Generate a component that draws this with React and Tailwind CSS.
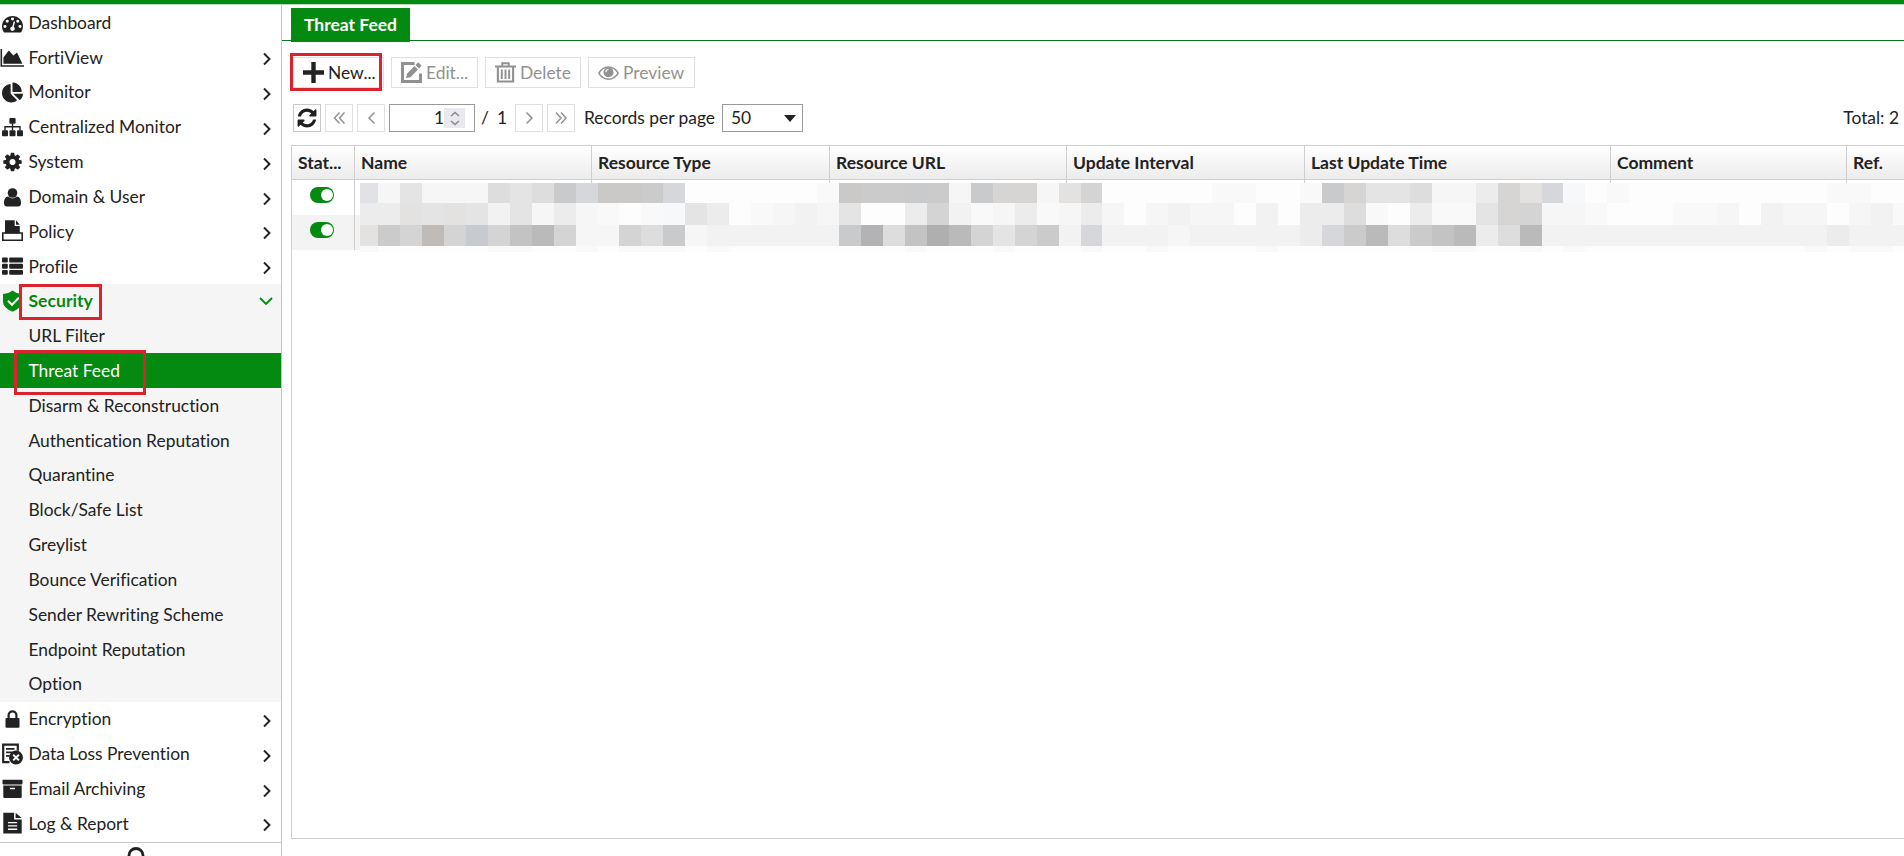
import React, { useState } from "react";
import clsx from "clsx";
import { FaChartPie } from "react-icons/fa";

const Svg = ({ children, className = "h-6 w-6" }) => (
  <svg className={clsx("shrink-0", className)} viewBox="0 0 24 24" fill="currentColor">
    {children}
  </svg>
);

const DashboardIcon = () => (
  <Svg>
    <path
      transform="translate(2 2.9) scale(0.01172)"
      d="M384 1152q0-53-37.5-90.5t-90.5-37.5-90.5 37.5-37.5 90.5 37.5 90.5 90.5 37.5 90.5-37.5 37.5-90.5zm192-448q0-53-37.5-90.5t-90.5-37.5-90.5 37.5-37.5 90.5 37.5 90.5 90.5 37.5 90.5-37.5 37.5-90.5zm428 481l101-382q6-26-7.5-48.5t-38.5-29.5-48 6.5-30 39.5l-101 382q-60 5-107 43.5t-63 98.5q-20 77 20 146t117 89 146-20 89-117q16-60-6-117t-72-91zm660-33q0-53-37.5-90.5t-90.5-37.5-90.5 37.5-37.5 90.5 37.5 90.5 90.5 37.5 90.5-37.5 37.5-90.5zm-640-640q0-53-37.5-90.5t-90.5-37.5-90.5 37.5-37.5 90.5 37.5 90.5 90.5 37.5 90.5-37.5 37.5-90.5zm448 192q0-53-37.5-90.5t-90.5-37.5-90.5 37.5-37.5 90.5 37.5 90.5 90.5 37.5 90.5-37.5 37.5-90.5zm320 448q0 261-141 483-19 29-54 29h-1402q-35 0-54-29-141-221-141-483 0-182 71-348t191-286 286-191 348-71 348 71 286 191 191 286 71 348z"
    />
  </Svg>
);

const AreaIcon = () => (
  <Svg>
    <path d="M.5 4h1.6v16.2H24v1.6H.5z" />
    <path d="M3.4 18.8v-6.2l5.4-7.1 4.6 5 3.6-3 5.4 11.3z" />
  </Svg>
);

const PieIcon = () => <FaChartPie className="ml-0.5 mr-px h-[21px] w-[21px] shrink-0" />;

const SitemapIcon = () => (
  <Svg>
    <rect x="9.4" y="3" width="6.2" height="5.8" rx="1" />
    <rect x="2" y="15.2" width="6" height="6" rx="1" />
    <rect x="9.5" y="15.2" width="6" height="6" rx="1" />
    <rect x="17" y="15.2" width="6" height="6" rx="1" />
    <path d="M5 15.5v-3.8h15v3.8M12.5 8.5v7" fill="none" stroke="currentColor" strokeWidth="1.4" />
  </Svg>
);

const CogIcon = () => (
  <Svg>
    <path
      transform="translate(1.8 1.3) scale(0.01195)"
      d="M1152 896q0-106-75-181t-181-75-181 75-75 181 75 181 181 75 181-75 75-181zm512-109v222q0 12-8 23t-20 13l-185 28q-19 54-39 91 35 50 107 138 10 12 10 25t-9 23q-27 37-99 108t-94 71q-12 0-26-9l-138-108q-44 23-91 38-16 136-29 186-7 28-36 28h-222q-14 0-24.5-8.5t-11.5-21.5l-28-184q-49-16-90-37l-141 107q-10 9-25 9-14 0-25-11-126-114-165-168-7-10-7-23 0-12 8-23 15-21 51-66.5t54-70.5q-27-50-41-99l-183-27q-13-2-21-12.5t-8-23.5v-222q0-12 8-23t19-13l186-28q14-46 39-92-40-57-107-138-10-12-10-24 0-10 9-23 26-36 98.5-107.5t94.5-71.5q13 0 26 10l138 107q44-23 91-38 16-136 29-186 7-28 36-28h222q14 0 24.5 8.5t11.5 21.5l28 184q49 16 90 37l142-107q9-9 24-9 13 0 25 10 129 119 165 170 7 8 7 22 0 12-8 23-15 21-51 66.5t-54 70.5q26 50 41 98l183 28q13 2 21 12.5t8 23.5z"
    />
  </Svg>
);

const UserIcon = () => (
  <Svg>
    <circle cx="12.5" cy="8" r="4.8" />
    <path d="M8.2 11.6a6 6 0 0 0 8.6 0c3 .2 4.2 3 4.2 6.6 0 2-1.2 3.3-3 3.3H7c-1.8 0-3-1.3-3-3.3 0-3.6 1.2-6.4 4.2-6.6z" />
  </Svg>
);

const PolicyIcon = () => (
  <Svg>
    <path d="M5 1.3h9.7V7h5.1v7.3H5z" />
    <path d="M16 1.3l3.8 4.4H16z" />
    <path d="M5.3 14H2.8v7.3h19.4V14h-2.4" fill="none" stroke="currentColor" strokeWidth="1.6" />
    <path d="M5 13.2h14.8v1.6H5z" />
  </Svg>
);

const ListIcon = () => (
  <Svg>
    <rect x="2" y="3.6" width="5.8" height="5" rx="1" />
    <rect x="9.2" y="3.6" width="13.8" height="5" rx="1" />
    <rect x="2" y="9.8" width="5.8" height="5" rx="1" />
    <rect x="9.2" y="9.8" width="13.8" height="5" rx="1" />
    <rect x="2" y="16" width="5.8" height="4.8" rx="1" />
    <rect x="9.2" y="16" width="13.8" height="4.8" rx="1" />
  </Svg>
);

const ShieldIcon = () => (
  <Svg>
    <path d="M12.5 1.6c2.5 2 5.6 3.2 9.5 3.4v7.5c0 5-4.5 8-9.5 10.2C7.5 20.5 3 17.5 3 12.5V5c3.9-.2 7-1.4 9.5-3.4z" />
    <path d="M8 11.8l4 4 6.8-7" fill="none" stroke="#fff" strokeWidth="2" />
  </Svg>
);

const LockIcon = () => (
  <Svg>
    <rect x="5.5" y="11" width="14" height="9.8" rx="1" />
    <path d="M8.6 11.5V8.3a3.9 3.9 0 0 1 7.8 0v3.2" fill="none" stroke="currentColor" strokeWidth="2.2" />
  </Svg>
);

const DlpIcon = () => (
  <Svg>
    <path d="M9.5 20.2H3.2V2.6h14.6v6.2" fill="none" stroke="currentColor" strokeWidth="2.2" />
    <path d="M6 6.8h8.5M6 10.3h6.5M6 13.8h3.5" stroke="currentColor" strokeWidth="1.7" />
    <circle cx="16" cy="15.6" r="7" />
    <path d="M13.2 12.7l5.7 5.7M18.9 12.7l-5.7 5.7" stroke="#fff" strokeWidth="2" />
  </Svg>
);

const ArchiveIcon = () => (
  <Svg>
    <rect x="2.5" y="2.8" width="20" height="4.6" rx=".8" />
    <path fillRule="evenodd" d="M3.3 8.5h18.4v11.6q0 1-1 1H4.3q-1 0-1-1zM10 10.7v1.5h5v-1.5z" />
  </Svg>
);

const FileIcon = () => (
  <Svg>
    <path fillRule="evenodd" d="M3.3 1.8h10.8v6.6h7.6v14.2H3.3zM8 11v1.3h9.2V11zm0 3.3v1.3h9.2v-1.3zm0 3.3v1.3h9.2v-1.3z" />
    <path d="M15.6 1.8l6 5.2h-6z" />
  </Svg>
);

const PlusIcon = () => (
  <Svg className="h-[21px] w-[21px]">
    <path d="M9.5 0h5v9.5H24v5h-9.5V24h-5v-9.5H0v-5h9.5z" />
  </Svg>
);

const EditIcon = () => (
  <Svg className="h-[21px] w-[21px]">
    <path d="M15.5 1.7H1.7v20.6h20.6V13" fill="none" stroke="currentColor" strokeWidth="3.4" />
    <path d="M5.8 18.3l1-5 8.6-8.7 4 4-8.6 8.7zM16.5 3.5l2.4-2.4q.8-.8 1.6 0l2.4 2.4q.8.8 0 1.6l-2.4 2.4z" />
  </Svg>
);

const TrashIcon = () => (
  <Svg className="h-[21px] w-[21px]">
    <path d="M0 5.2h24M8.3 5V1.5h7.4V5" fill="none" stroke="currentColor" strokeWidth="2.2" />
    <path d="M3.3 5.5v16.8h17.4V5.5" fill="none" stroke="currentColor" strokeWidth="2.4" />
    <path d="M7.8 8.5v11M12 8.5v11M16.2 8.5v11" stroke="currentColor" strokeWidth="2.2" />
  </Svg>
);

const EyeIcon = () => (
  <Svg className="h-[21px] w-[21px]">
    <path
      d="M1 12.8C3.5 8.3 7.4 5.8 12 5.8s8.5 2.5 11 7c-2.5 4.5-6.4 7-11 7s-8.5-2.5-11-7z"
      fill="none"
      stroke="currentColor"
      strokeWidth="1.7"
    />
    <circle cx="12" cy="11.8" r="5.7" />
    <path d="M9 11.6a3 3 0 0 1 3-3" fill="none" stroke="#fff" strokeWidth="1.2" />
  </Svg>
);

const RefreshIcon = () => (
  <svg className="h-[22px] w-[22px] shrink-0 text-[#1d1f20]" viewBox="0 0 1792 1792" fill="currentColor">
    <path d="M1639 1056q0 5-1 7-64 268-268 434.5t-478 166.5q-146 0-282.5-55t-243.5-157l-129 129q-19 19-45 19t-45-19-19-45v-448q0-26 19-45t45-19h448q26 0 45 19t19 45-19 45l-137 137q71 66 161 102t187 36q134 0 250-65t186-179q11-17 53-117 8-23 30-23h192q13 0 22.5 9.5t9.5 22.5zm25-800v448q0 26-19 45t-45 19h-448q-26 0-45-19t-19-45 19-45l138-138q-148-137-349-137-134 0-250 65t-186 179q-11 17-53 117-8 23-30 23h-199q-13 0-22.5-9.5t-9.5-22.5v-7q65-268 270-434.5t480-166.5q146 0 284 55.5t245 156.5l130-129q19-19 45-19t45 19 19 45z" />
  </svg>
);

// d is drawn in a 14x14 box
const Chevron = ({ d, className, width = 1.5 }) => (
  <svg className={clsx("h-3.5 w-3.5 shrink-0", className)} viewBox="0 0 14 14" fill="none" stroke="currentColor" strokeWidth={width}>
    <path d={d} />
  </svg>
);

const menu = [
  { name: "Dashboard", icon: DashboardIcon, leaf: true },
  { name: "FortiView", icon: AreaIcon },
  { name: "Monitor", icon: PieIcon },
  { name: "Centralized Monitor", icon: SitemapIcon },
  { name: "System", icon: CogIcon },
  { name: "Domain & User", icon: UserIcon },
  { name: "Policy", icon: PolicyIcon },
  { name: "Profile", icon: ListIcon },
  {
    name: "Security",
    icon: ShieldIcon,
    children: [
      "URL Filter",
      "Threat Feed",
      "Disarm & Reconstruction",
      "Authentication Reputation",
      "Quarantine",
      "Block/Safe List",
      "Greylist",
      "Bounce Verification",
      "Sender Rewriting Scheme",
      "Endpoint Reputation",
      "Option",
    ],
  },
  { name: "Encryption", icon: LockIcon },
  { name: "Data Loss Prevention", icon: DlpIcon },
  { name: "Email Archiving", icon: ArchiveIcon },
  { name: "Log & Report", icon: FileIcon },
];

const columns = ["Stat...", "Name", "Resource Type", "Resource URL", "Update Interval", "Last Update Time", "Comment", "Ref."];

const shades = {
  A: "bg-[#afafaf]",
  B: "bg-[#bababa]",
  C: "bg-[#c3c3c3]",
  D: "bg-[#cbcbcb]",
  E: "bg-[#d4d4d4]",
  F: "bg-[#dddddd]",
  G: "bg-[#e4e4e4]",
  H: "bg-[#ececec]",
  I: "bg-[#f2f2f2]",
  J: "bg-[#f6f6f6]",
  K: "bg-[#f9f9f9]",
  L: "bg-[#fdfdfd]",
  a: "bg-[#bfbbb8]",
  b: "bg-[#c8cacc]",
  c: "bg-[#d5d7da]",
  d: "bg-[#e0e2e6]",
  e: "bg-[#cbc9c8]",
  f: "bg-[#d6d5d3]",
  g: "bg-[#e3e2e0]",
  h: "bg-[#c7cbd0]",
  k: "bg-[#b3b2b4]",
  n: "bg-[#f7f8fa]",
};

// Pixelated cover over the record values, one letter per block
const mosaic = [
  "dJGJJJFGFbceeDcLLLLLLKeDDbDJbffJgELLLLLKKLLKbfGGFJJHfgcnLKLLLLLLLLLKKLL",
  "HHgGgGIGJHJKLKnGHLKJIJGLLHEIKJHKJHJLJIJJLILHHFKLHKKGfEJJKLLLKKJLIJJLJIK",
  "gDEaEhECBEJJEFbJIIIIIIbkFCABEGEDIcIIIJIIIIIHcDBFDCBHFBIIIIIIIIIIIIIHIII",
  "KLLLLLKKLLKLKKKLKLLLLLLLLKLLLKLLLKLLKLLLLKLLLLLLLKKLLKLKLLLLLLLLLLKLKKL",
];

const Marker = ({ className }) => (
  <span className={clsx("pointer-events-none absolute z-10 border-[3px] border-[#d9232e]", className)} />
);

const Toggle = () => (
  <span className="flex h-4 w-6 items-center justify-end rounded-full bg-[#048a10] pr-[1.5px]">
    <span className="h-3 w-3 rounded-full bg-white" />
  </span>
);

const ToolButton = ({ icon: Icon, label, disabled, className }) => (
  <button
    className={clsx(
      "flex h-[31px] items-center gap-1 border border-[#e0e0e0] pl-[9px]",
      disabled ? "text-[#919191]" : "text-[#222]",
      className
    )}
  >
    <Icon />
    <span>{label}</span>
  </button>
);

const PageButton = ({ children, className }) => (
  <button className={clsx("flex h-7 w-7 items-center justify-center border text-[#919191]", className)}>{children}</button>
);

const Sidebar = ({ active, onSelect }) => (
  <nav className="flex w-[282px] shrink-0 flex-col border-r border-[#c3c5c6]">
    {menu.map(({ name, icon: Icon, leaf, children }) => (
      <div key={name} className={clsx(children && "bg-[#f5f5f5]")}>
        <div className={clsx("relative flex h-[34.84px] items-center", children && "text-[17.6px] font-bold text-[#048a10]")}>
          <Icon />
          <span className="ml-[4.5px] flex-1">{name}</span>
          {!leaf && !children && <Chevron className="mr-[7px] mt-1" width={1.9} d="M4 1.5l5.5 5.5L4 12.5" />}
          {children && <Chevron className="mr-2" width={1.9} d="M1 4l6 6 6-6" />}
          {children && <Marker className="left-[19px] top-0 h-9 w-[83px]" />}
        </div>
        {children?.map((child) => (
          <div
            key={child}
            onClick={() => onSelect(child)}
            className={clsx("relative flex h-[34.84px] cursor-pointer items-center pl-[28.5px]", child === active && "bg-[#048a10] text-white")}
          >
            <span>{child}</span>
            {child === "Threat Feed" && <Marker className="-top-[3px] left-[14px] h-[45px] w-[132px]" />}
          </div>
        ))}
      </div>
    ))}
    <div className="mt-auto flex h-3.5 shrink-0 justify-center overflow-hidden border-t border-[#c3c5c6] pr-[9px] pt-1">
      <svg className="h-6 w-6 shrink-0" viewBox="0 0 24 24" fill="none" stroke="#222" strokeWidth="2.8">
        <circle cx="12" cy="8.5" r="7" />
      </svg>
    </div>
  </nav>
);

const Toolbar = () => (
  <div className="relative ml-[11px] mt-4 flex gap-[7px]">
    <ToolButton icon={PlusIcon} label="New..." className="w-[91px]" />
    <ToolButton icon={EditIcon} label="Edit..." disabled className="w-[87px]" />
    <ToolButton icon={TrashIcon} label="Delete" disabled className="w-24" />
    <ToolButton icon={EyeIcon} label="Preview" disabled className="w-[107px]" />
    <Marker className="-left-[3px] -top-1 h-[38px] w-[92px]" />
  </div>
);

const Pager = () => (
  <div className="ml-[11px] mt-4 flex h-7 items-center">
    <PageButton className="border-[#c8c8c8]">
      <RefreshIcon />
    </PageButton>
    <PageButton className="ml-1 border-[#e0e0e0]">
      <Chevron d="M7.5 1.5L2.5 7l5 5.5M12.500 1.500L7.500 7l5 5.500" />
    </PageButton>
    <PageButton className="ml-1 border-[#e0e0e0]">
      <Chevron d="M10.500 1.500L5 7l5.500 5.500" />
    </PageButton>
    <div className="ml-1 flex h-7 w-[86px] items-center justify-end border border-[#999] pr-[9px]">
      <span>1</span>
      <span className="flex h-5 w-[21px] items-center justify-center bg-[#e9e9ef] text-[#8b8b8b]">
        <svg className="h-[15px] w-2.5" viewBox="0 0 10 15" fill="none" stroke="currentColor" strokeWidth="1.6">
          <path d="M1 5l4-3.5L9 5M1 10l4 3.5L9 10" />
        </svg>
      </span>
    </div>
    <span className="ml-1.5 w-2">/</span>
    <span className="ml-2 w-[10px]">1</span>
    <PageButton className="ml-2 border-[#e0e0e0]">
      <Chevron d="M4.5 1.5L10 7l-5.5 5.5" />
    </PageButton>
    <PageButton className="ml-1 border-[#e0e0e0]">
      <Chevron d="M2 1.5L7 7l-5 5.5M7 1.5L12 7l-5 5.5" />
    </PageButton>
    <span className="ml-[9px] w-[138px] whitespace-nowrap">Records per page</span>
    <div className="flex h-7 w-[81px] items-center justify-between border border-[#999] pl-2 pr-1.5">
      <span>50</span>
      <svg className="h-[7px] w-3" viewBox="0 0 12 7" fill="#222">
        <path d="M0 0h12L6 7z" />
      </svg>
    </div>
    <span className="ml-auto mr-[5px]">Total: 2</span>
  </div>
);

const gridCols = "grid grid-cols-[63px_237px_238px_237px_238px_306px_236px_1fr]";

const RecordTable = () => (
  <div className="relative mb-[17px] ml-[9px] mt-[13px] flex-1 border-y border-l border-[#cfcfcf]">
    <div className={clsx(gridCols, "h-[34px] border-b border-[#cfcfcf] bg-gradient-to-b from-white to-[#ececec] text-[17.5px] font-bold")}>
      {columns.map((col) => (
        <div key={col} className="flex items-center border-r border-[#cfcfcf] pl-1.5 last:border-r-0">
          <span>{col}</span>
        </div>
      ))}
    </div>
    {[0, 1].map((row) => (
      <div key={row} className={clsx(gridCols, "h-[35px]", row === 1 && "bg-[#f3f3f3]")}>
        {columns.map((col, i) => (
          <div key={col} className="flex items-start justify-center border-r border-[#cfcfcf] pr-0.5 pt-[7px] last:border-r-0">
            {i === 0 && <Toggle />}
          </div>
        ))}
      </div>
    ))}
    <div className="absolute left-[68px] right-0 top-[37px] grid grid-cols-[18px_repeat(70,21.96px)] grid-rows-[20px_22px_21px_6px] overflow-hidden">
      {mosaic.map((line, r) => line.split("").map((k, c) => <span key={`${r}-${c}`} className={shades[k]} />))}
    </div>
  </div>
);

const App = () => {
  const [active, setActive] = useState("Threat Feed");

  return (
    <div className="flex h-screen flex-col overflow-hidden bg-white font-['Lato',sans-serif] text-[17.4px] leading-none text-[#222] [font-variant-ligatures:none]">
      <div className="h-[5px] shrink-0 border-b border-[#b5dcb9] bg-[#048a10]" />
      <div className="flex min-h-0 flex-1">
        <Sidebar active={active} onSelect={setActive} />
        <main className="flex min-w-0 flex-1 flex-col">
          <div className="h-9 shrink-0 border-b border-[#0a7420] pl-[9px] pt-[3px]">
            <div className="flex h-[34px] w-[119px] items-center justify-center bg-[#048a10] pb-px text-[17.5px] font-bold text-white">
              {active}
            </div>
          </div>
          <Toolbar />
          <Pager />
          <RecordTable />
        </main>
      </div>
    </div>
  );
};

export default App;
